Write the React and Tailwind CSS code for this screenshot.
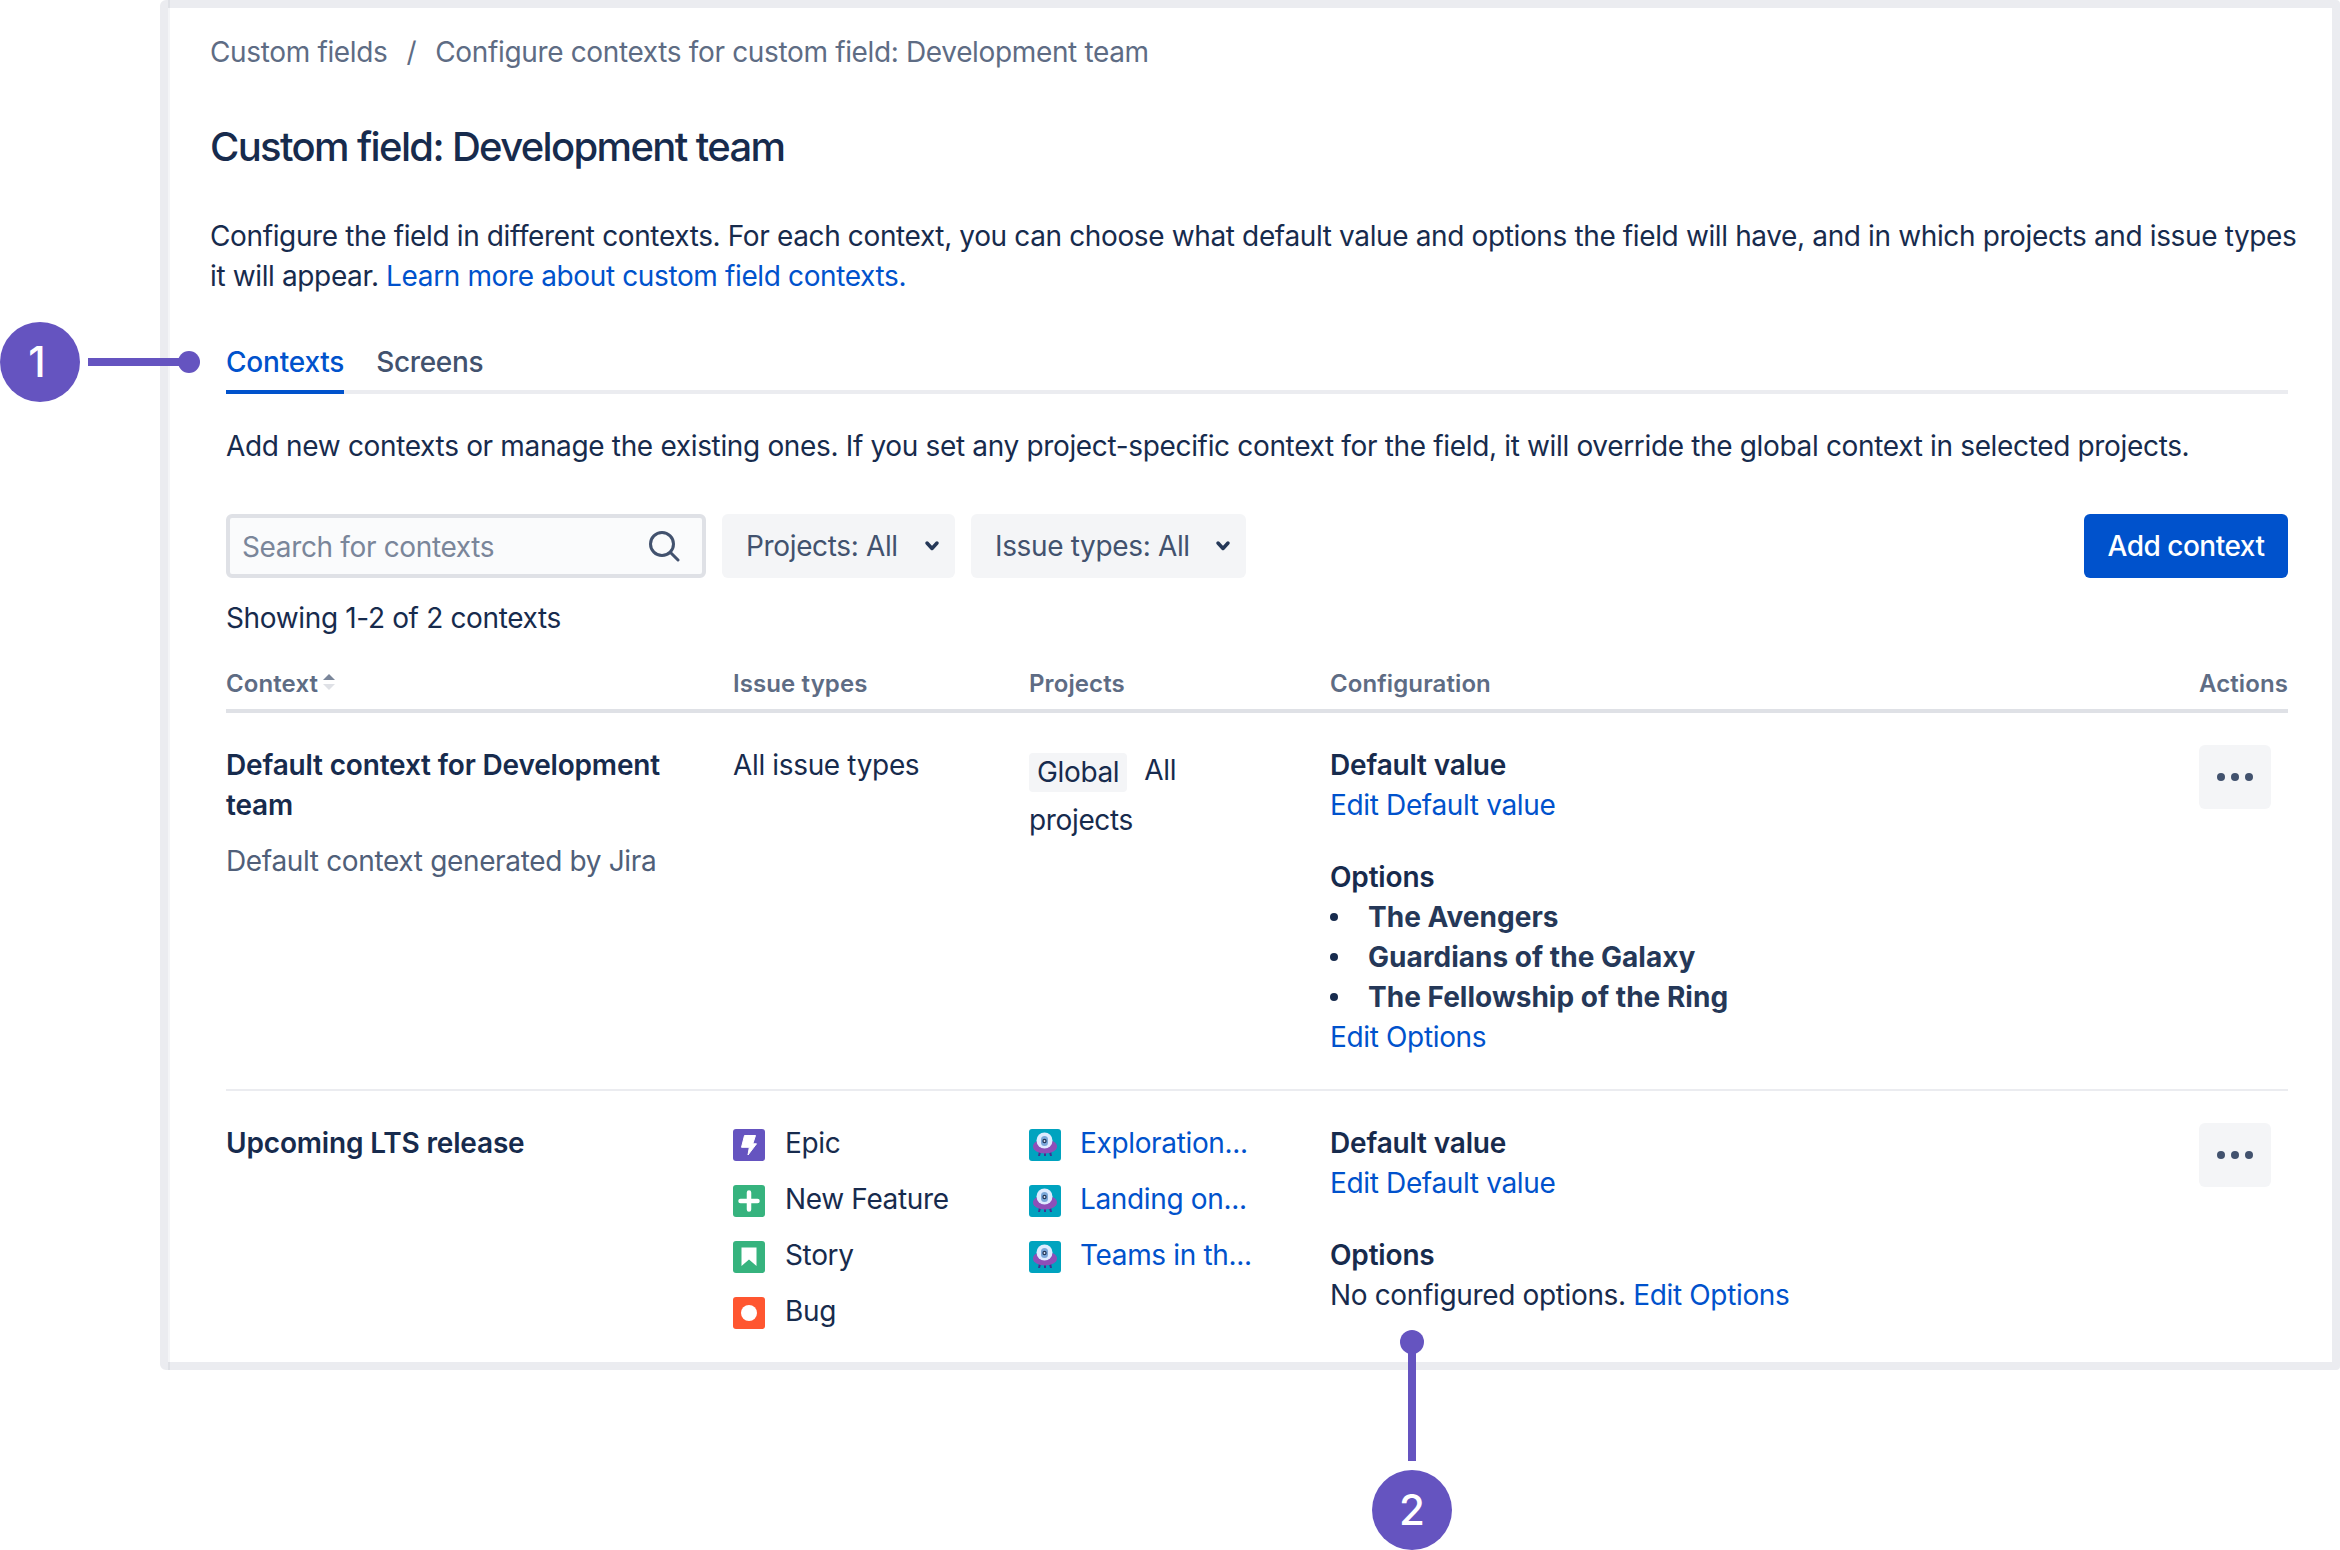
function SearchIcon() {
  return (
    <svg width="32" height="32" viewBox="0 0 32 32" fill="none" stroke="#42526E" strokeWidth="3" strokeLinecap="round">
      <circle cx="14" cy="14" r="11.5" />
      <path d="M23 23l7 7" />
    </svg>
  )
}

function Chevron() {
  return (
    <svg width="16" height="12" viewBox="0 0 16 12" fill="none" stroke="#253858" strokeWidth="3.5" strokeLinecap="round" strokeLinejoin="round">
      <path d="M3 3l5 5.5L13 3" />
    </svg>
  )
}

function SortIcon() {
  return (
    <svg width="12" height="16" viewBox="0 0 12 16" className="ml-[5px] -mt-[4px]">
      <path d="M6 0l6 6H0z" fill="#7A869A" />
      <path d="M6 16l6-6H0z" fill="#DFE1E6" />
    </svg>
  )
}

function Dots() {
  return (
    <svg width="36" height="10" viewBox="0 0 36 10" fill="#42526E">
      <circle cx="4" cy="5" r="4" />
      <circle cx="18" cy="5" r="4" />
      <circle cx="32" cy="5" r="4" />
    </svg>
  )
}

function IssueIcon({ type }) {
  if (type === 'epic') {
    return (
      <svg width="32" height="32" viewBox="0 0 32 32" className="shrink-0 mt-[4px]">
        <rect width="32" height="32" rx="3" fill="#6554C0" />
        <path d="M11.5 6.5H22.5l-2.7 8.3h3.7L15 26l1.3-7.7H8.5z" fill="#fff" stroke="#fff" strokeLinejoin="round" />
      </svg>
    )
  }
  if (type === 'feature') {
    return (
      <svg width="32" height="32" viewBox="0 0 32 32" className="shrink-0 mt-[4px]">
        <rect width="32" height="32" rx="3" fill="#36B37E" />
        <path d="M16 7.5v17M7.5 16h17" stroke="#fff" strokeWidth="4.5" strokeLinecap="round" />
      </svg>
    )
  }
  if (type === 'story') {
    return (
      <svg width="32" height="32" viewBox="0 0 32 32" className="shrink-0 mt-[4px]">
        <rect width="32" height="32" rx="3" fill="#36B37E" />
        <path d="M8.5 6.5h15v18.5l-7.5-6.5-7.5 6.5z" fill="#fff" />
      </svg>
    )
  }
  return (
    <svg width="32" height="32" viewBox="0 0 32 32" className="shrink-0 mt-[4px]">
      <rect width="32" height="32" rx="3" fill="#FF5630" />
      <circle cx="16" cy="16" r="8" fill="#fff" />
    </svg>
  )
}

function ProjectIcon() {
  return (
    <svg width="32" height="32" viewBox="0 0 32 32" className="shrink-0 mt-[4px]">
      <rect width="32" height="32" rx="3" fill="#00A3BF" />
      <path d="M10 22l-1 5h2l1-4zM22 22l1 5h-2l-1-4zM15 24h2v3h-2z" fill="#403294" />
      <ellipse cx="16" cy="17.5" rx="12" ry="7" fill="#8E4FB8" />
      <circle cx="15.5" cy="11.5" r="8" fill="#DEEBFF" />
      <rect x="12" y="7" width="7" height="10" rx="3.5" fill="#7AA7D9" />
      <circle cx="15.5" cy="12" r="2.2" fill="#253858" />
      <circle cx="15.5" cy="12" r="0.9" fill="#DEEBFF" />
    </svg>
  )
}

function Callout({ n, className }) {
  return (
    <div className={`absolute w-[80px] h-[80px] rounded-full bg-[#6554C0] text-white flex items-center justify-center text-[42px] leading-none tracking-normal font-medium ${className}`}>
      {n}
    </div>
  )
}

function Link({ children }) {
  return <a className="text-[#0052CC]">{children}</a>
}

function ActionButton() {
  return (
    <div className="w-[72px] h-[64px] rounded-[6px] bg-[#F4F5F7] flex items-center justify-center">
      <Dots />
    </div>
  )
}

function FilterSelect({ label, width }) {
  return (
    <div className={`h-[64px] rounded-[6px] bg-[#F4F5F7] flex items-center justify-between pl-[24px] pr-[15px] text-[#42526E] ${width}`}>
      <span>{label}</span>
      <Chevron />
    </div>
  )
}

function Bullet({ children }) {
  return (
    <li className="flex items-center">
      <span className="w-[8px] h-[8px] rounded-full bg-[#172B4D] mr-[30px]" />
      {children}
    </li>
  )
}

export default function App() {
  return (
    <div className="relative w-[2340px] h-[1550px] bg-white text-[28px] leading-[40px] tracking-[-0.35px] text-[#172B4D] [font-family:Inter,sans-serif] overflow-hidden">
      <div className="ml-[160px] h-[1370px] border-[8px] border-[#EBECF0] rounded-l-[6px] rounded-r-[4px]">
        <div className="h-full border-l-[2px] border-[#F4F5F7] pl-[40px]">
          <div className="pt-[24px] text-[#5E6C84] flex gap-[19px]">
            <span>Custom fields</span>
            <span>/</span>
            <span>Configure contexts for custom field: Development team</span>
          </div>
          <h1 className="mt-[47px] text-[40px] leading-[56px] font-[550] tracking-[-1.65px]">Custom field: Development team</h1>
          <p className="mt-[41px] w-[2100px] tracking-[-0.37px]">
            Configure the field in different contexts. For each context, you can choose what default value and options the field will have, and in which projects and issue types it will appear. <Link>Learn more about custom field contexts.</Link>
          </p>

          <div className="ml-[16px] w-[2062px]">
            <div className="mt-[46px] flex gap-[32px] border-b-[4px] border-[#EBECF0]">
              <div className="h-[48px] -mb-[4px] border-b-[4px] border-[#0052CC] box-content text-[#0052CC] font-medium tracking-[-0.2px]">Contexts</div>
              <div className="h-[48px] text-[#42526E] font-medium">Screens</div>
            </div>
            <p className="mt-[32px] tracking-[-0.34px]">Add new contexts or manage the existing ones. If you set any project-specific context for the field, it will override the global context in selected projects.</p>

            <div className="mt-[48px] flex items-center gap-[16px]">
              <div className="w-[480px] h-[64px] rounded-[6px] border-[4px] border-[#DFE1E6] bg-[#FAFBFC] flex items-center justify-between pl-[12px] pr-[22px]">
                <span className="pt-[2px] text-[#7A869A]">Search for contexts</span>
                <SearchIcon />
              </div>
              <FilterSelect label="Projects: All" width="w-[233px]" />
              <FilterSelect label="Issue types: All" width="w-[275px]" />
              <button className="ml-auto w-[204px] h-[64px] rounded-[6px] bg-[#0052CC] text-white font-medium tracking-[-0.5px]">Add context</button>
            </div>
            <p className="mt-[20px]">Showing 1-2 of 2 contexts</p>

            <div className="mt-[30px] h-[45px] grid grid-cols-[507px_296px_301px_1fr_auto] border-b-[4px] border-[#DFE1E6] text-[24px] leading-[32px] tracking-[0.1px] font-semibold text-[#5E6C84]">
              <div className="flex items-center h-[32px]">Context<SortIcon /></div>
              <div>Issue types</div>
              <div>Projects</div>
              <div>Configuration</div>
              <div>Actions</div>
            </div>

            <div className="grid grid-cols-[507px_296px_301px_1fr_auto] pt-[32px] pb-[32px] border-b-[2px] border-[#EBECF0]">
              <div>
                <div className="font-semibold tracking-[-0.17px] w-[470px]">Default context for Development team</div>
                <div className="mt-[16px] text-[#505F79]">Default context generated by Jira</div>
              </div>
              <div>All issue types</div>
              <div className="w-[180px] leading-[50px]">
                <span className="inline-block h-[39px] leading-[39px] px-[8px] rounded-[4px] bg-[#F4F5F7] align-middle mr-[17px]">Global</span>
                All projects
              </div>
              <div>
                <div className="font-semibold tracking-[-0.17px]">Default value</div>
                <Link>Edit Default value</Link>
                <div className="mt-[32px] font-semibold tracking-[-0.17px]">Options</div>
                <ul className="font-bold tracking-[0.02px] text-[#253858]">
                  <Bullet>The Avengers</Bullet>
                  <Bullet>Guardians of the Galaxy</Bullet>
                  <Bullet>The Fellowship of the Ring</Bullet>
                </ul>
                <Link>Edit Options</Link>
              </div>
              <div className="mr-[17px]"><ActionButton /></div>
            </div>

            <div className="grid grid-cols-[507px_296px_301px_1fr_auto] pt-[32px]">
              <div className="font-semibold tracking-[-0.17px]">Upcoming LTS release</div>
              <div className="flex flex-col gap-[16px]">
                <div className="flex items-center gap-[20px] h-[40px]"><IssueIcon type="epic" />Epic</div>
                <div className="flex items-center gap-[20px] h-[40px]"><IssueIcon type="feature" />New Feature</div>
                <div className="flex items-center gap-[20px] h-[40px]"><IssueIcon type="story" />Story</div>
                <div className="flex items-center gap-[20px] h-[40px]"><IssueIcon type="bug" />Bug</div>
              </div>
              <div className="flex flex-col gap-[16px]">
                <div className="flex items-center gap-[19px] h-[40px]"><ProjectIcon /><Link>Exploration...</Link></div>
                <div className="flex items-center gap-[19px] h-[40px]"><ProjectIcon /><Link>Landing on...</Link></div>
                <div className="flex items-center gap-[19px] h-[40px]"><ProjectIcon /><Link>Teams in th...</Link></div>
              </div>
              <div>
                <div className="font-semibold tracking-[-0.17px]">Default value</div>
                <Link>Edit Default value</Link>
                <div className="mt-[32px] font-semibold tracking-[-0.17px]">Options</div>
                <div>No configured options. <Link>Edit Options</Link></div>
              </div>
              <div className="mr-[17px]"><ActionButton /></div>
            </div>
          </div>
        </div>
      </div>

      <div className="absolute left-[168px] top-0 w-[2px] h-[8px] bg-[#DFE1E6]" />
      <div className="absolute left-[168px] top-[1362px] w-[2px] h-[8px] bg-[#DFE1E6]" />

      <Callout n="1" className="left-0 top-[322px] pr-[6px]" />
      <div className="absolute left-[88px] top-[358px] w-[95px] h-[8px] bg-[#6554C0]" />
      <div className="absolute left-[178px] top-[351px] w-[22px] h-[22px] rounded-full bg-[#6554C0]" />

      <div className="absolute left-[1400px] top-[1330px] w-[24px] h-[24px] rounded-full bg-[#6554C0]" />
      <div className="absolute left-[1408px] top-[1345px] w-[8px] h-[116px] bg-[#6554C0]" />
      <Callout n="2" className="left-[1372px] top-[1470px]" />
    </div>
  )
}
